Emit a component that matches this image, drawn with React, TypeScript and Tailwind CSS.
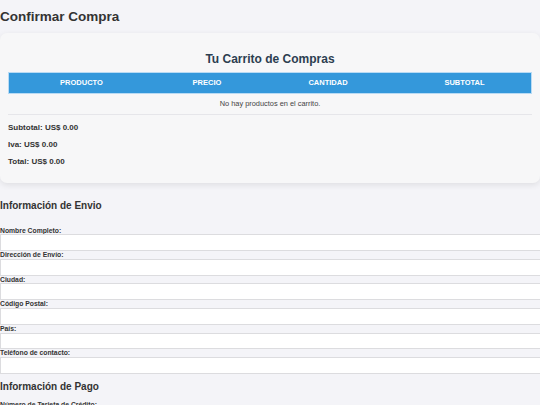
import React from "react";

const fields = [
  "Nombre Completo:",
  "Dirección de Envío:",
  "Ciudad:",
  "Código Postal:",
  "País:",
  "Teléfono de contacto:",
];

const cols = ["PRODUCTO", "PRECIO", "CANTIDAD", "SUBTOTAL"];

export default function App() {
  return (
    <div
      className="h-screen overflow-hidden bg-[#f4f4f8] text-[#333]"
      style={{ fontFamily: '"Liberation Sans", Arial, sans-serif' }}
    >
      <h1 className="mt-[9px] text-[13.5px] font-bold leading-[16px]">Confirmar Compra</h1>

      <section className="mt-[8px] rounded-[7px] bg-[#f7f7f8] px-[8px] pb-[16px] pt-[19px] shadow-[0_2px_6px_rgba(0,0,0,0.09)]">
        <h2 className="text-center text-[12px] font-bold leading-[14px] text-[#2c3e50]">
          Tu Carrito de Compras
        </h2>
        <div className="mt-[6px]">
          <div className="grid h-[22px] grid-cols-[145px_106px_136px_137px] items-center border border-[#b9dbf4] bg-[#3498db] text-[7.5px] font-bold text-white">
            {cols.map((c) => (
              <div key={c} className="text-center">
                {c}
              </div>
            ))}
          </div>
          <div className="flex h-[21px] items-center justify-center border-b border-[#e6e6ea] text-[7.4px] text-[#444]">
            No hay productos en el carrito.
          </div>
        </div>
        <div className="mt-[8px] flex flex-col gap-[7px] text-[8px] font-bold leading-[10px] text-[#333]">
          <p>Subtotal: US$ 0.00</p>
          <p>Iva: US$ 0.00</p>
          <p>Total: US$ 0.00</p>
        </div>
      </section>

      <h2 className="mt-[17px] text-[10px] font-bold leading-[12px]">Información de Envio</h2>
      <form className="mt-[14.5px] flex flex-col">
        {fields.map((f) => (
          <div key={f} className="flex flex-col">
            <label className="block text-[6.8px] font-bold leading-[7.8px]">{f}</label>
            <input
              type="text"
              className="h-[16.8px] w-[560px] border border-[#dcdcdf] bg-white outline-none"
            />
          </div>
        ))}
      </form>

      <h2 className="mt-[7px] text-[10px] font-bold leading-[12px]">Información de Pago</h2>
      <label className="mt-[8px] block text-[6.8px] font-bold leading-[7.8px]">
        Número de Tarjeta de Crédito:
      </label>
      <input
        type="text"
        className="h-[16.8px] w-[560px] border border-[#dcdcdf] bg-white outline-none"
      />
    </div>
  );
}
